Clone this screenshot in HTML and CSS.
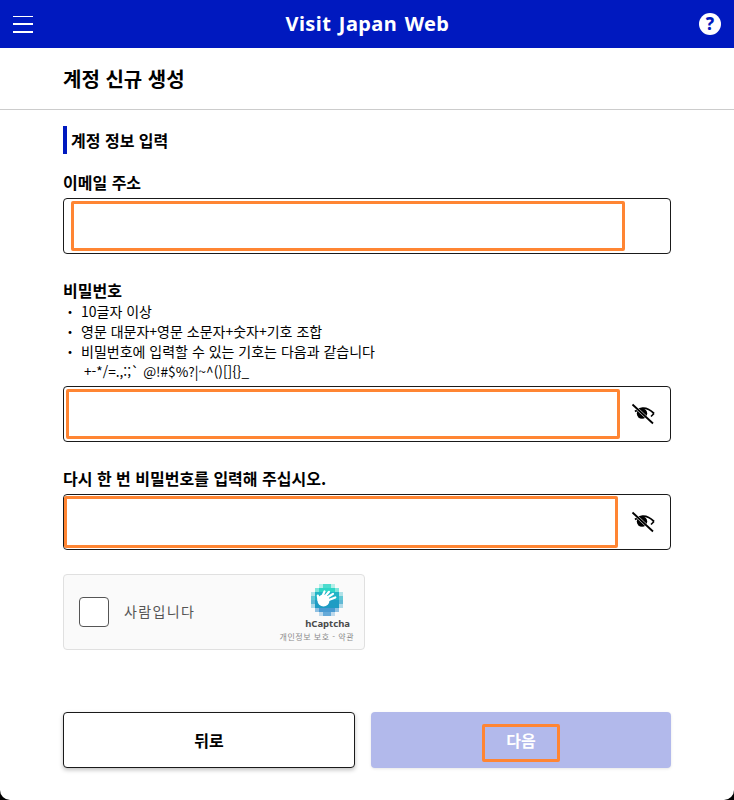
FILE: index.html
```html
<!DOCTYPE html>
<html lang="ko">
<head>
    <meta charset="UTF-8">
    <meta name="viewport" content="width=device-width, initial-scale=1.0">
    <title>Visit Japan Web</title>
    <link rel="stylesheet" href="styles.css">
</head>
<body>
    <div class="page">
        <header class="app-bar">
            <button class="menu-btn" type="button" aria-label="menu">
                <span></span><span></span><span></span>
            </button>
            <div class="app-title">Visit Japan Web</div>
            <div class="help-btn">?</div>
        </header>

        <div class="page-title">계정 신규 생성</div>

        <form class="content">
            <h2 class="section-title">계정 정보 입력</h2>

            <label class="field-label">이메일 주소</label>
            <div class="input-box email-box">
                <div class="mark mark-email"></div>
            </div>

            <label class="field-label password-label">비밀번호</label>
            <ul class="rules">
                <li>10글자 이상</li>
                <li>영문 대문자+영문 소문자+숫자+기호 조합</li>
                <li>비밀번호에 입력할 수 있는 기호는 다음과 같습니다<br><span class="symbols">+-*/=.,:;` @!#$%?|~^()[]{}_</span></li>
            </ul>
            <div class="input-box">
                <div class="mark mark-password"></div>
                <svg class="eye" viewBox="0 0 24 24" width="24" height="24">
                    <path d="M4 9.5 C6.5 7.6 8.5 6.4 11.5 6.2 C15.5 5.9 19.5 8 23 11.5" fill="none" stroke="#000" stroke-width="1.8"/>
                    <path d="M20 14.5 L23 11.5" fill="none" stroke="#000" stroke-width="1.6"/>
                    <circle cx="11" cy="11.5" r="5.2" fill="#000"/>
                    <path d="M1.5 2.5 L22 21.5" stroke="#fff" stroke-width="2.8"/>
                    <path d="M1.5 2.5 L22 21.5" stroke="#000" stroke-width="1.8"/>
                </svg>
            </div>

            <label class="field-label confirm-label">다시 한 번 비밀번호를 입력해 주십시오.</label>
            <div class="input-box">
                <div class="mark mark-confirm"></div>
                <svg class="eye" viewBox="0 0 24 24" width="24" height="24">
                    <path d="M4 9.5 C6.5 7.6 8.5 6.4 11.5 6.2 C15.5 5.9 19.5 8 23 11.5" fill="none" stroke="#000" stroke-width="1.8"/>
                    <path d="M20 14.5 L23 11.5" fill="none" stroke="#000" stroke-width="1.6"/>
                    <circle cx="11" cy="11.5" r="5.2" fill="#000"/>
                    <path d="M1.5 2.5 L22 21.5" stroke="#fff" stroke-width="2.8"/>
                    <path d="M1.5 2.5 L22 21.5" stroke="#000" stroke-width="1.8"/>
                </svg>
            </div>

            <div class="captcha">
                <div class="captcha-check"></div>
                <div class="captcha-text">사람입니다</div>
                <div class="captcha-brand">
                    <svg class="captcha-logo" viewBox="0 0 32 32" width="32" height="32">
                        <g fill="#2ed6c6">
                            <rect x="12" y="0" width="8" height="4" opacity=".85"/>
                            <rect x="8" y="0" width="4" height="4" opacity=".35"/>
                            <rect x="20" y="0" width="4" height="4" opacity=".35"/>
                            <rect x="8" y="4" width="16" height="4"/>
                            <rect x="4" y="4" width="4" height="4" opacity=".6"/>
                            <rect x="24" y="4" width="4" height="4" opacity=".6"/>
                        </g>
                        <g fill="#22b4c6">
                            <rect x="4" y="8" width="24" height="8"/>
                            <rect x="0" y="8" width="4" height="4" opacity=".35"/>
                            <rect x="28" y="8" width="4" height="4" opacity=".35"/>
                            <rect x="0" y="12" width="4" height="4" opacity=".7"/>
                            <rect x="28" y="12" width="4" height="4" opacity=".7"/>
                        </g>
                        <g fill="#1f9cc4">
                            <rect x="4" y="16" width="24" height="8"/>
                            <rect x="0" y="16" width="4" height="4" opacity=".7"/>
                            <rect x="28" y="16" width="4" height="4" opacity=".7"/>
                            <rect x="0" y="20" width="4" height="4" opacity=".35"/>
                            <rect x="28" y="20" width="4" height="4" opacity=".35"/>
                        </g>
                        <g fill="#4a9bd2">
                            <rect x="8" y="24" width="16" height="4"/>
                            <rect x="4" y="24" width="4" height="4" opacity=".6"/>
                            <rect x="24" y="24" width="4" height="4" opacity=".6"/>
                            <rect x="12" y="28" width="8" height="4" opacity=".85"/>
                            <rect x="8" y="28" width="4" height="4" opacity=".35"/>
                            <rect x="20" y="28" width="4" height="4" opacity=".35"/>
                        </g>
                        <circle cx="12.5" cy="16.5" r="6" fill="#fff"/>
                        <g stroke="#fff" stroke-width="2.2" stroke-linecap="round">
                            <path d="M7.5 16 L6.8 11.5"/>
                            <path d="M11 13 L13.5 7.5"/>
                            <path d="M13.5 13 L18 7.8"/>
                            <path d="M15.5 14 L22 9.8"/>
                            <path d="M16.5 16.5 L24.3 13.5"/>
                        </g>
                    </svg>
                    <div class="captcha-name">hCaptcha</div>
                    <div class="captcha-links">개인정보 보호 - 약관</div>
                </div>
            </div>

            <div class="actions">
                <button class="btn btn-back" type="button">뒤로</button>
                <button class="btn btn-next" type="button">다음<span class="mark mark-next"></span></button>
            </div>
        </form>
    </div>
</body>
</html>
```

FILE: styles.css
```css
* {
    box-sizing: border-box;
}
html, body {
    margin: 0;
    height: 800px;
    overflow: hidden;
    background: #000;
}
body {
    font-family: "Noto Sans CJK KR", "Noto Sans", sans-serif;
    color: #000;
}
.page {
    width: 734px;
    height: 800px;
    background: #fff;
    border-radius: 0 0 10px 10px;
    overflow: hidden;
}
.app-bar {
    height: 48px;
    background: #0019bf;
    color: #fff;
    display: flex;
    align-items: center;
    justify-content: space-between;
    padding: 0 13px;
}
.menu-btn {
    width: 20px;
    height: 17px;
    padding: 0;
    border: none;
    background: none;
    display: flex;
    flex-direction: column;
    justify-content: space-between;
}
.menu-btn span {
    display: block;
    width: 20px;
    height: 1.6px;
    background: #fff;
}
.app-title {
    margin: 0 0 2px 3px;
    font-family: "Noto Sans", sans-serif;
    font-weight: 700;
    font-size: 20px;
    letter-spacing: 0.4px;
    word-spacing: 2px;
}
.help-btn {
    width: 22px;
    height: 22px;
    border-radius: 50%;
    background: #fff;
    color: #0019bf;
    font-family: "Noto Sans", sans-serif;
    font-weight: 800;
    font-size: 17px;
    line-height: 22px;
    text-align: center;
}
.page-title {
    height: 62px;
    padding: 0 63px;
    border-bottom: 1px solid #ccc;
    font-size: 20px;
    font-weight: 700;
    line-height: 62px;
}
.content {
    padding: 16px 63px 0;
}
.section-title {
    margin: 0 0 16px;
    height: 28px;
    border-left: 4px solid #0019bf;
    padding-left: 4px;
    font-size: 16px;
    font-weight: 700;
    line-height: 28px;
}
.field-label {
    display: block;
    font-size: 16px;
    font-weight: 700;
    line-height: 24px;
    height: 28px;
}
.input-box {
    position: relative;
    height: 56px;
    border: 1px solid #1a1a1a;
    border-radius: 4px;
    display: flex;
    align-items: center;
    justify-content: flex-end;
    padding-right: 15px;
}
.password-label {
    margin-top: 24px;
    height: 23px;
}
.confirm-label {
    margin-top: 24px;
    height: 28px;
}
.rules {
    list-style: none;
    margin: 0 0 3px;
    padding: 0;
    font-size: 14px;
    line-height: 20px;
    height: 82px;
}
.rules li {
    padding-left: 18px;
    position: relative;
}
.rules li::before {
    content: "・";
    position: absolute;
    left: 0;
}
.symbols {
    margin-left: 3px;
    font-size: 13.7px;
}
/* orange annotation boxes sit on top of the page */
.mark {
    position: absolute;
    border: 3px solid #ff8533;
    border-radius: 2px;
}
.mark-email {
    left: 7px;
    top: 2px;
    width: 554px;
    height: 50px;
}
.mark-password {
    left: 2px;
    top: 2px;
    width: 554px;
    height: 50px;
}
.mark-confirm {
    left: 0;
    top: 1px;
    width: 554px;
    height: 52px;
}
.captcha {
    margin-top: 24px;
    width: 302px;
    height: 76px;
    background: #fafafa;
    border: 1px solid #e0e0e0;
    border-radius: 4px;
    display: flex;
    align-items: center;
    padding: 0 10px 0 15px;
}
.captcha-check {
    width: 30px;
    height: 30px;
    background: #fff;
    border: 1px solid #555;
    border-radius: 4px;
}
.captcha-text {
    margin: 0 0 2px 15px;
    font-size: 14px;
    letter-spacing: 1.4px;
    color: #555;
}
.captcha-brand {
    margin-left: auto;
    display: flex;
    flex-direction: column;
    align-items: flex-end;
    padding-top: 2px;
}
.captcha-logo {
    display: block;
    margin-right: 11px;
}
.captcha-name {
    margin-top: 1px;
    margin-right: 4px;
    font-family: "Noto Sans", sans-serif;
    font-size: 9.5px;
    font-weight: 700;
    line-height: 14px;
    color: #4a4a4a;
}
.captcha-links {
    font-size: 8px;
    line-height: 12px;
    letter-spacing: 0.5px;
    color: #8a8a8a;
}
.actions {
    margin-top: 62px;
    display: flex;
    gap: 16px;
}
.btn {
    position: relative;
    height: 56px;
    border-radius: 4px;
    font-family: "Noto Sans CJK KR", sans-serif;
    font-size: 16px;
    font-weight: 700;
    box-shadow: 0 2px 4px rgba(0, 0, 0, 0.25);
}
.btn-back {
    width: 292px;
    background: #fff;
    border: 1px solid #1a1a1a;
    color: #000;
}
.btn-next {
    width: 300px;
    background: #b2b9eb;
    border: none;
    color: #fff;
    box-shadow: 0 1px 3px rgba(0, 0, 0, 0.1);
}
.mark-next {
    left: 111px;
    top: 12px;
    width: 78px;
    height: 38px;
}
```
